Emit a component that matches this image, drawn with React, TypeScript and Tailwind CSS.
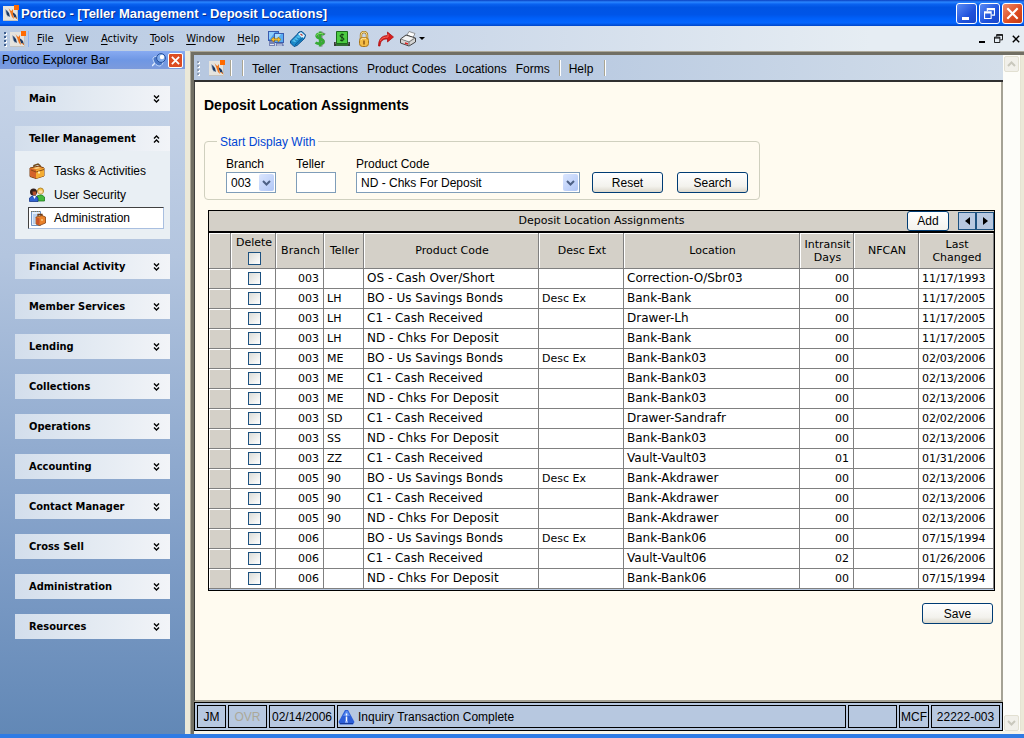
import type { ReactNode } from 'react';

const uiFont = "font-['Liberation_Sans',Arial,sans-serif]";
const tahoma = "font-['DejaVu_Sans_Condensed','Liberation_Sans',sans-serif]";
const verdana = "font-['DejaVu_Sans',sans-serif]";

function Logo() {
  return (
    <svg width="16" height="16" viewBox="0 0 16 16" aria-hidden="true">
      <rect x="0" y="1" width="15" height="15" fill="#e6e4de" />
      <path d="M0 15.500h14.500V5" stroke="#c4c3bf" fill="none" />
      <path d="M2 4l3 2 1 5-1 1-2-3z" fill="#8fa3bd" />
      <path d="M3 5l3 3 1 4-3-2z" fill="#1d3a63" />
      <path d="M9 7l2 1 2 2 1 4-3-2z" fill="#1d3a63" />
      <path d="M5.500 3l1.500 2 1.500 1 1.500-2v5l1 5-2-2-1.500-4z" fill="#f0761e" />
      <path d="M12 12l2 2" stroke="#f0761e" />
      <rect x="11" y="0" width="5" height="5" fill="#ff6a00" />
    </svg>
  );
}

function Svg16({ children }: { children: ReactNode }) {
  return (
    <svg width="16" height="16" viewBox="0 0 16 16" aria-hidden="true">
      {children}
    </svg>
  );
}

function ComputersIcon() {
  return (
    <Svg16>
      <rect x="0.500" y="0.500" width="10" height="9" fill="#4a9dec" stroke="#3a5cae" />
      <path d="M1 1h6l-5 7H1z" fill="#8fcdfa" />
      <rect x="6.500" y="2.500" width="9" height="9" fill="#58adf2" stroke="#3a5cae" />
      <path d="M7 3h6l-5 6H7z" fill="#a6dafc" />
      <path d="M1 10h5l1 2v3H1zM8 12h7l1 3H8z" fill="#7583b5" />
      <path d="M2 13.500h4M9 14h5" stroke="#dfe5f5" />
      <path d="M3 8.500l3-2.500v1.700h4V6l3 2.500-3 2.500V9.300H6V11z" stroke="#a87400" strokeWidth="0.600" fill="#f8c02c" />
    </Svg16>
  );
}

function PhoneIcon() {
  return (
    <Svg16>
      <path d="M0.500 10L7 3.500l2-2.500 3-0.500 3.500 3.500-1 3.500L7 14.500l-3 1L0.500 12z" fill="#1786c8" stroke="#0b4f8c" />
      <path d="M2 10l6-6 2.500 2L4 12.500z" fill="#4fbdec" />
      <path d="M8 3l3-2 4 3.500-1.500 2.500-2-0.500z" fill="#dff3fc" />
      <path d="M10.500 3l2 1.500" stroke="#b43a3a" strokeWidth="1.200" />
      <path d="M3 10.500l1.500 1.500M5 8.500l1.500 1.500M7 6.500l1.500 1.500" stroke="#0b5f9c" />
      <path d="M5 14l8-7.500" stroke="#0d5e9a" />
    </Svg16>
  );
}

function DollarIcon() {
  return (
    <Svg16>
      <path d="M13 3.500C11 1.500 6 2 6 5s6 2.500 6 5.500-4.500 3-7 1M9.500 0.500v15" fill="none" stroke="#7b8a80" strokeWidth="2" />
      <path d="M12 4C10 2 4.500 2 4.500 5s7 2.500 7 5.500-5.500 3-8 1M8 0.500v15" fill="none" stroke="#35ab33" strokeWidth="2.400" />
      <path d="M11 3C9 2 5 2.200 4.500 4.500" fill="none" stroke="#8be36a" />
    </Svg16>
  );
}

function CashIcon() {
  return (
    <Svg16>
      <path d="M0 11h16v4H0z" fill="#3a3a3a" />
      <path d="M1 12h14" stroke="#8d8d8d" />
      <path d="M2.500 0.500h11v12h-11z" fill="#4ccb42" stroke="#1b6a1b" />
      <path d="M10 4C9 3 6 3.300 6 5s4 1.200 4 3-3 2-4 1M8 2.500v8" fill="none" stroke="#0e3b10" />
      <path d="M2 14h12" stroke="#2c9e2c" />
    </Svg16>
  );
}

function LockIcon() {
  return (
    <Svg16>
      <path d="M5 8V4a3 3 0 0 1 6 0v4" fill="none" stroke="#a77b22" strokeWidth="2.400" />
      <path d="M5 8V4a3 3 0 0 1 6 0v4" fill="none" stroke="#f7dc8c" />
      <rect x="3.500" y="6.500" width="9" height="9" rx="3" fill="#f4bd45" stroke="#a8741b" />
      <path d="M5 9c0-2 3-2 5-1.500" stroke="#fdeab0" fill="none" />
      <path d="M8 9.500v4" stroke="#8c5510" strokeWidth="1.500" />
    </Svg16>
  );
}

function ArrowIcon() {
  return (
    <Svg16>
      <path d="M0.500 15C0.500 8 4 4.500 9.500 4.500V1l6 5-6 5V8C5 8 2.500 9.500 2 15z" fill="#d81c1c" stroke="#a30d0d" strokeWidth="0.700" />
      <path d="M2 10c1.500-3 4-4 8-4V3" stroke="#f46a5c" fill="none" />
    </Svg16>
  );
}

function PrinterIcon() {
  return (
    <Svg16>
      <path d="M7 4l2-3.500 6 2-2 4z" fill="#ffffff" stroke="#7c7c7c" strokeWidth="0.800" />
      <path d="M0.500 8L6 4l9.500 3v4L9 15 0.500 12z" fill="#d4d4d4" stroke="#444" />
      <path d="M1 8l8 3 6-4M9 11v4" stroke="#777" fill="none" />
      <path d="M2 8l4-3 7 2-4 3z" fill="#f4f4f4" />
      <path d="M5 12l3 1" stroke="#d82222" strokeWidth="1.500" />
    </Svg16>
  );
}

function BriefcaseIcon() {
  return (
    <Svg16>
      <path d="M5 5V2.500l4-1.500 2 1.500V5" fill="none" stroke="#6d4a1c" strokeWidth="1.500" />
      <path d="M1 5l9-2 5 2v8l-8 2.500-6-2z" fill="#e98b2a" stroke="#7c3f10" />
      <path d="M7 7l8-2v8l-8 2.500z" fill="#f4ad33" />
      <path d="M1 5l6 2v8l-6-2z" fill="#d4622a" />
      <path d="M2 7l5 2 8-2.500" stroke="#8c4a14" fill="none" />
      <path d="M9 8.500h2v2H9z" fill="#fff0b8" />
      <path d="M4 5l5-1 3 1-5 1z" fill="#fbd68a" />
    </Svg16>
  );
}

function UsersIcon() {
  return (
    <Svg16>
      <circle cx="11.500" cy="4" r="3" fill="#f6c34a" stroke="#a37418" strokeWidth="0.800" />
      <path d="M9.500 3.500h4v3h-4z" fill="#fbdcae" />
      <path d="M8 14V9l3-1h2l2.500 2v4z" fill="#43b93a" stroke="#217a20" strokeWidth="0.800" />
      <circle cx="4.500" cy="5" r="3.500" fill="#33201c" />
      <path d="M3.500 4.500h3.500v4H4z" fill="#b5502c" />
      <path d="M0.500 14.500V11L3 9h4l2 2v3.500z" fill="#2f62d0" stroke="#173a8e" strokeWidth="0.800" />
      <path d="M4 9l1.500 3L7 9z" fill="#ffffff" />
    </Svg16>
  );
}

function AdminIcon() {
  return (
    <Svg16>
      <path d="M1.500 1.500h9v14h-9z" fill="#e4effb" stroke="#6f93c4" />
      <path d="M1 1.500h10" stroke="#8a7a4a" strokeDasharray="1 1" />
      <path d="M3 5h6M3 7h3M3 9h2M3 11h2M3 13h2" stroke="#8fb2de" />
      <path d="M8 6V4.500h4V6" fill="none" stroke="#6d3c14" strokeWidth="1.300" />
      <path d="M6 7l6-1.500 3.500 1.500v6l-6 2.500L6 14z" fill="#e9822a" stroke="#85400f" strokeWidth="0.800" />
      <path d="M6.500 7.500l3 1V15l-3-1.200z" fill="#c9522a" />
      <path d="M12 9v2" stroke="#ffe9a8" />
    </Svg16>
  );
}

function PinIcon() {
  return (
    <svg width="14" height="14" viewBox="0 0 14 14" aria-hidden="true">
      <path d="M0 13l4-4" stroke="#e6f0ff" strokeWidth="1.500" />
      <path d="M1 5c2-2 4-2 6-1l4 4c0 3-1 4-3 5-4 0-7-4-7-8z" fill="#4b78c8" stroke="#dcebff" strokeWidth="0.800" />
      <circle cx="9" cy="5" r="4.400" fill="#7fabeb" stroke="#27509c" />
      <circle cx="10" cy="4" r="2.200" fill="#ffffff" />
    </svg>
  );
}

function AlertIcon() {
  return (
    <svg width="17" height="16" viewBox="0 0 17 16" aria-hidden="true">
      <path d="M7 1h3l6.500 12-1.500 2.500H2L0.500 13z" fill="#2d5fd8" />
      <path d="M8 2h1.500l2.500 5-7 0z" fill="#5b8cf0" />
      <path d="M2 14.500h13" stroke="#153a9c" />
      <path d="M8.500 4.500v2M8.500 7.500v5" stroke="#ffffff" strokeWidth="1.500" />
      <path d="M7 13h3" stroke="#c9dbff" />
    </svg>
  );
}

function Chevrons({ up = false }: { up?: boolean }) {
  return (
    <svg width="7" height="8" viewBox="0 0 7 8" aria-hidden="true" fill="none" stroke="#000" strokeWidth="1.400">
      {up ? <path d="M1 3.500l2.500-2.500 2.500 2.500M1 7.500l2.500-2.500 2.500 2.500" /> : <path d="M1 0.500l2.500 2.500 2.500-2.500M1 4.500l2.500 2.500 2.500-2.500" />}
    </svg>
  );
}

function Grip({ tone }: { tone: string }) {
  return (
    <span className="flex flex-col gap-[2px]" aria-hidden="true">
      {[0, 1, 2, 3].map((i) => (
        <span key={i} className={`h-[2px] w-[2px] shadow-[1px_1px_0_#ffffff] ${tone}`} />
      ))}
    </span>
  );
}

function RestoreGlyph({ size }: { size: number }) {
  return (
    <svg width={size} height={size} viewBox="0 0 10 10" aria-hidden="true" fill="none" stroke="currentColor">
      <path d="M3 3V0.500h6.500v6H7M3 1.500h6.500" />
      <path d="M0.500 3.500h6v6h-6zM0.500 4.500h6" />
    </svg>
  );
}

function CrossGlyph({ size, weight }: { size: number; weight: number }) {
  return (
    <svg width={size} height={size} viewBox="0 0 10 10" aria-hidden="true" stroke="currentColor" strokeWidth={weight}>
      <path d="M1 1l8 8M9 1l-8 8" />
    </svg>
  );
}

function TitleBar() {
  const btn = 'flex h-[21px] w-[21px] items-center justify-center rounded-[3px] border border-white text-white';
  return (
    <header className="flex h-[26px] shrink-0 items-center bg-[linear-gradient(to_bottom,#0a3fc0_0%,#2a86ff_8%,#0a62f0_16%,#0054e3_28%,#0055e8_56%,#0060fa_72%,#0566fe_88%,#0046c8_100%)] pr-[1px] pl-[3px]">
      <Logo />
      <h1 className="grow pt-[1px] pl-[2px] text-[13px] font-bold text-white [text-shadow:1px_1px_0_#0a2f8c]">
        Portico - [Teller Management - Deposit Locations]
      </h1>
      <div className="flex gap-[2px]">
        <button type="button" aria-label="Minimize" className={`${btn} bg-[linear-gradient(135deg,#5a8bf5,#1f52dc_60%,#1a47c8)]`}>
          <span className="mr-[3px] mb-[3px] h-[3px] w-[7px] self-end bg-white" />
        </button>
        <button type="button" aria-label="Restore" className={`${btn} bg-[linear-gradient(135deg,#5a8bf5,#1f52dc_60%,#1a47c8)]`}>
          <RestoreGlyph size={11} />
        </button>
        <button type="button" aria-label="Close" className={`${btn} bg-[linear-gradient(135deg,#ee8b6c,#dc4a1f_60%,#c23a12)]`}>
          <CrossGlyph size={13} weight={1.6} />
        </button>
      </div>
    </header>
  );
}

const menus = ['File', 'View', 'Activity', 'Tools', 'Window', 'Help'];
const tools: [string, ReactNode][] = [
  ['Connect', <ComputersIcon />],
  ['Phone', <PhoneIcon />],
  ['Currency', <DollarIcon />],
  ['Cash', <CashIcon />],
  ['Lock', <LockIcon />],
  ['Forward', <ArrowIcon />],
  ['Print', <PrinterIcon />],
];

function MenuBar() {
  return (
    <nav className="flex h-[25px] shrink-0 items-center bg-[linear-gradient(to_right,#b9cbe3,#c9d6e8_40%,#e6edf3_85%)] pr-[4px] pl-[4px]">
      <Grip tone="bg-[#3f5f8e]" />
      <span className="ml-[4px] border-r border-[#8fb2ec] pr-[2px]">
        <Logo />
      </span>
      <div className={`ml-[2px] flex pt-[1px] text-[11px] ${tahoma}`}>
        {menus.map((m) => (
          <button key={m} type="button" className="px-[6px]">
            <span className="underline underline-offset-2">{m[0]}</span>
            {m.slice(1)}
          </button>
        ))}
      </div>
      <div className="ml-[2px] flex gap-[6px]">
        {tools.map(([name, icon]) => (
          <button key={name} type="button" aria-label={name}>
            {icon}
          </button>
        ))}
      </div>
      <button type="button" aria-label="Print options" className="ml-[3px] border-x-[3px] border-t-[3px] border-x-transparent border-t-black" />
      <div className="ml-auto flex items-center gap-[9px]">
        <button type="button" aria-label="Minimize window" className="flex h-[9px] items-end">
          <span className="h-[2px] w-[6px] bg-black" />
        </button>
        <button type="button" aria-label="Restore window">
          <RestoreGlyph size={9} />
        </button>
        <button type="button" aria-label="Close window">
          <CrossGlyph size={8} weight={1.8} />
        </button>
      </div>
    </nav>
  );
}

function SectionHeader({ title, open = false }: { title: string; open?: boolean }) {
  return (
    <button
      type="button"
      aria-expanded={open}
      className={`flex h-[25px] w-full items-center justify-between bg-[linear-gradient(to_right,#d3deec,#e3eaf2_50%,#f2f4f8)] pr-[10px] pl-[14px] text-[11px] font-bold ${tahoma}`}
    >
      <span className="pt-[2px]">{title}</span>
      <Chevrons up={open} />
    </button>
  );
}

const sections = [
  'Financial Activity',
  'Member Services',
  'Lending',
  'Collections',
  'Operations',
  'Accounting',
  'Contact Manager',
  'Cross Sell',
  'Administration',
  'Resources',
];

function Sidebar() {
  return (
    <aside className="flex w-[185px] shrink-0 flex-col bg-[linear-gradient(to_bottom,#c9d6e9,#b3c5df_30%,#7d9cc6_75%,#6288b6)]">
      <div className="flex h-[18px] items-center bg-[linear-gradient(to_bottom,#88abf2,#6f97e4_50%,#7c9bdc)] pr-[2px] pl-[2px]">
        <h2 className="grow text-[12px]">Portico Explorer Bar</h2>
        <button type="button" aria-label="Pin">
          <PinIcon />
        </button>
        <button type="button" aria-label="Close explorer bar" className="ml-[2px] flex h-[15px] w-[15px] items-center justify-center rounded-[2px] border border-white bg-[#dd4c22] text-white">
          <CrossGlyph size={9} weight={2} />
        </button>
      </div>
      <div className="flex flex-col gap-[15px] px-[15px] pt-[17px]">
        <SectionHeader title="Main" />
        <section className="bg-[#e9eff4]">
          <SectionHeader title="Teller Management" open />
          <ul className="flex flex-col px-[6px] pt-[8px] pb-[10px] text-[12px]">
            <li>
              <a href="#tasks" className="flex h-[24px] items-center gap-[9px] pl-[8px]">
                <BriefcaseIcon />
                Tasks &amp; Activities
              </a>
            </li>
            <li>
              <a href="#security" className="flex h-[24px] items-center gap-[9px] pl-[8px]">
                <UsersIcon />
                User Security
              </a>
            </li>
            <li className="ml-[7px]">
              <a href="#administration" className="flex h-[22px] items-center gap-[8px] border border-t-[#404040] border-r-[#a9bfe0] border-b-[#a9bfe0] border-l-[#404040] bg-white pl-[1px]">
                <AdminIcon />
                Administration
              </a>
            </li>
          </ul>
        </section>
        {sections.map((s) => (
          <SectionHeader key={s} title={s} />
        ))}
      </div>
    </aside>
  );
}

function Divider() {
  return <span className="block h-[16px] w-[2px] border-r border-l border-r-white border-l-[#a9a593]" aria-hidden="true" />;
}

function PageToolbar() {
  return (
    <nav className="flex h-[27px] items-center border-b-2 border-[#303030] bg-[linear-gradient(to_right,#b7c8e0,#b9cae1_45%,#d3deea)] text-[12px]">
      <span className="ml-[3px]">
        <Grip tone="bg-[#8e9bb0]" />
      </span>
      <span className="mr-[5px] ml-[10px]">
        <Logo />
      </span>
      <Divider />
      <span className="ml-[10px]">
        <Divider />
      </span>
      <div className="ml-[8px] flex gap-[9px] pt-[2px]">
        <button type="button">Teller</button>
        <button type="button">Transactions</button>
        <button type="button">Product Codes</button>
        <button type="button">Locations</button>
        <button type="button">Forms</button>
      </div>
      <span className="mr-[8px] ml-[9px]">
        <Divider />
      </span>
      <button type="button" className="pt-[2px]">Help</button>
      <span className="ml-[11px]">
        <Divider />
      </span>
    </nav>
  );
}

const pushButton =
  'h-[21px] w-[71px] rounded-[3px] border border-[#003c74] bg-[linear-gradient(to_bottom,#ffffff,#f3f2ed_70%,#dcd8cc)] pt-[1px] text-[12px]';

function SelectBox({ id, value, className }: { id: string; value: string; className: string }) {
  return (
    <div className="relative">
      <select id={id} defaultValue={value} className={`block h-[21px] appearance-none border border-[#7f9db9] bg-white pl-[4px] text-[12px] ${className}`}>
        <option>{value}</option>
      </select>
      <span className="pointer-events-none absolute top-[2px] right-[2px] flex h-[17px] w-[15px] items-center justify-center rounded-[2px] bg-[linear-gradient(135deg,#dbe6fe,#b0c6f6)]">
        <svg width="9" height="6" viewBox="0 0 9 6" aria-hidden="true" fill="none" stroke="#4d6185" strokeWidth="2">
          <path d="M1 1l3.500 3.500L8 1" />
        </svg>
      </span>
    </div>
  );
}

function FilterForm() {
  return (
    <fieldset className="mt-[19px] mr-auto ml-[9px] rounded-[4px] border border-[#d0d0bf] pr-[11px] pb-[6px] pl-[12px] text-[12px]">
      <legend className="px-[3px] pt-[2px] leading-[16px] text-[#0046d5]">Start Display With</legend>
      <div className="flex items-end pt-[6px] pl-[9px]">
        <div>
          <label htmlFor="branch" className="block leading-[16px]">Branch</label>
          <SelectBox id="branch" value="003" className="w-[50px]" />
        </div>
        <div className="ml-[20px]">
          <label htmlFor="teller" className="block leading-[16px]">Teller</label>
          <input id="teller" type="text" className="block h-[21px] w-[40px] border border-[#7f9db9] bg-white px-[3px]" />
        </div>
        <div className="ml-[20px]">
          <label htmlFor="product" className="block leading-[16px]">Product Code</label>
          <SelectBox id="product" value="ND - Chks For Deposit" className="w-[224px]" />
        </div>
        <button type="button" className={`ml-[12px] ${pushButton}`}>Reset</button>
        <button type="button" className={`ml-[14px] ${pushButton}`}>Search</button>
      </div>
    </fieldset>
  );
}

type Row = [branch: string, teller: string, product: string, desc: string, location: string, days: string, changed: string];

const rows: Row[] = [
  ['003', '', 'OS - Cash Over/Short', '', 'Correction-O/Sbr03', '00', '11/17/1993'],
  ['003', 'LH', 'BO - Us Savings Bonds', 'Desc Ex', 'Bank-Bank', '00', '11/17/2005'],
  ['003', 'LH', 'C1 - Cash Received', '', 'Drawer-Lh', '00', '11/17/2005'],
  ['003', 'LH', 'ND - Chks For Deposit', '', 'Bank-Bank', '00', '11/17/2005'],
  ['003', 'ME', 'BO - Us Savings Bonds', 'Desc Ex', 'Bank-Bank03', '00', '02/03/2006'],
  ['003', 'ME', 'C1 - Cash Received', '', 'Bank-Bank03', '00', '02/13/2006'],
  ['003', 'ME', 'ND - Chks For Deposit', '', 'Bank-Bank03', '00', '02/13/2006'],
  ['003', 'SD', 'C1 - Cash Received', '', 'Drawer-Sandrafr', '00', '02/02/2006'],
  ['003', 'SS', 'ND - Chks For Deposit', '', 'Bank-Bank03', '00', '02/13/2006'],
  ['003', 'ZZ', 'C1 - Cash Received', '', 'Vault-Vault03', '01', '01/31/2006'],
  ['005', '90', 'BO - Us Savings Bonds', 'Desc Ex', 'Bank-Akdrawer', '00', '02/13/2006'],
  ['005', '90', 'C1 - Cash Received', '', 'Bank-Akdrawer', '00', '02/13/2006'],
  ['005', '90', 'ND - Chks For Deposit', '', 'Bank-Akdrawer', '00', '02/13/2006'],
  ['006', '', 'BO - Us Savings Bonds', 'Desc Ex', 'Bank-Bank06', '00', '07/15/1994'],
  ['006', '', 'C1 - Cash Received', '', 'Vault-Vault06', '02', '01/26/2006'],
  ['006', '', 'ND - Chks For Deposit', '', 'Bank-Bank06', '00', '07/15/1994'],
];

const checkbox =
  'block h-[13px] w-[13px] mx-auto appearance-none border border-[#1c5180] bg-[linear-gradient(135deg,#dcdcd7,#ffffff)]';

function AssignmentsTable() {
  const th = 'border-r border-b border-[#808080] bg-[#d4d0c8] pl-[2px] font-normal leading-[13px] shadow-[inset_1px_1px_0_#ffffff]';
  const cell = 'h-[20px] border-r border-b border-[#808080] bg-white leading-[19px] whitespace-nowrap';
  const td = `${cell} px-[3px]`;
  const tdCheck = `${cell} pl-[2px]`;
  const tdNum = `${cell} pr-[4px] text-right`;
  return (
    <section className={`mt-[10px] mr-[6px] ml-[13px] border border-black bg-[#b7c8e0] pb-[1px] text-[11px] ${verdana}`}>
      <div className="grid h-[22px] grid-cols-[1fr_auto_1fr] items-center border-b-2 border-black bg-[#d4d0c8]">
        <span />
        <h3>Deposit Location Assignments</h3>
        <div className="flex items-center justify-end">
          <button type="button" className={`mr-[9px] h-[20px] w-[42px] rounded-[3px] border border-[#003c74] bg-[linear-gradient(to_bottom,#ffffff,#f3f2ed)] text-[12px] ${uiFont}`}>
            Add
          </button>
          <button type="button" aria-label="Previous page" className="flex h-[18px] w-[18px] items-center justify-center border border-[#1c5180] bg-[#b7c8e0]">
            <span className="border-y-[4px] border-r-[5px] border-y-transparent border-r-black" />
          </button>
          <button type="button" aria-label="Next page" className="flex h-[18px] w-[18px] items-center justify-center border border-[#1c5180] bg-[#b7c8e0]">
            <span className="border-y-[4px] border-l-[5px] border-y-transparent border-l-black" />
          </button>
        </div>
      </div>
      <table className="w-full table-fixed border-separate border-spacing-0">
        <colgroup>
          <col className="w-[22px]" />
          <col className="w-[45px]" />
          <col className="w-[48px]" />
          <col className="w-[40px]" />
          <col className="w-[175px]" />
          <col className="w-[85px]" />
          <col />
          <col className="w-[54px]" />
          <col className="w-[65px]" />
          <col className="w-[75px]" />
        </colgroup>
        <thead>
          <tr className="h-[36px]">
            <th className={th} aria-label="Row" />
            <th className={th}>
              <label htmlFor="delete-all" className="block pb-[3px]">Delete</label>
              <input id="delete-all" type="checkbox" className={checkbox} />
            </th>
            <th className={th}>Branch</th>
            <th className={th}>Teller</th>
            <th className={th}>Product Code</th>
            <th className={th}>Desc Ext</th>
            <th className={th}>Location</th>
            <th className={th}>Intransit Days</th>
            <th className={th}>NFCAN</th>
            <th className={th}>Last Changed</th>
          </tr>
        </thead>
        <tbody>
          {rows.map(([branch, teller, product, desc, location, days, changed], i) => (
            <tr key={i}>
              <td className="h-[20px] border-r border-b border-[#808080] bg-[#d4d0c8] shadow-[inset_1px_1px_0_#ffffff]" />
              <td className={tdCheck}>
                <input type="checkbox" aria-label={`Delete row ${i + 1}`} className={checkbox} />
              </td>
              <td className={tdNum}>{branch}</td>
              <td className={td}>{teller}</td>
              <td className={`${td} text-[12px]`}>{product}</td>
              <td className={td}>{desc}</td>
              <td className={`${td} text-[12px]`}>{location}</td>
              <td className={tdNum}>{days}</td>
              <td className={td} />
              <td className={td}>{changed}</td>
            </tr>
          ))}
        </tbody>
      </table>
    </section>
  );
}

function StatusBar() {
  const cell = 'flex items-center justify-center border border-black';
  return (
    <footer className="flex h-[29px] gap-[2px] border border-black bg-[#b7c8e0] p-[2px] text-[12px]">
      <span className={`${cell} w-[29px]`}>JM</span>
      <span className={`${cell} w-[39px] text-[#aca899]`}>OVR</span>
      <span className={`${cell} w-[66px]`}>02/14/2006</span>
      <span className="flex grow items-center gap-[3px] border border-black">
        <AlertIcon />
        Inquiry Transaction Complete
      </span>
      <span className={`${cell} w-[49px]`} />
      <span className={`${cell} w-[30px]`}>MCF</span>
      <span className={`${cell} w-[69px]`}>22222-003</span>
    </footer>
  );
}

function ScrollButton({ up = false }: { up?: boolean }) {
  return (
    <button type="button" disabled aria-label={up ? 'Scroll up' : 'Scroll down'} className="flex h-[16px] w-[15px] items-center justify-center rounded-[2px] border border-[#e2e0d2] bg-[#f1f0ea]">
      <svg width="9" height="6" viewBox="0 0 9 6" aria-hidden="true" fill="none" stroke="#c9c8bd" strokeWidth="2">
        {up ? <path d="M1 5l3.500-3.500L8 5" /> : <path d="M1 1l3.500 3.500L8 1" />}
      </svg>
    </button>
  );
}

export default function App() {
  return (
    <div className={`flex min-h-screen flex-col overflow-hidden bg-[#ece9d8] text-black ${uiFont}`}>
      <TitleBar />
      <MenuBar />
      <div className="flex grow">
        <Sidebar />
        <div className="ml-[5px] flex min-w-0 grow flex-col border-t border-l border-[#aca899]">
          <div className="flex grow flex-col border-t-[3px] border-l-[3px] border-[#716f64]">
            <div className="flex grow">
              <main className="flex min-w-0 grow flex-col">
                <PageToolbar />
                <div className="flex grow flex-col border-r-2 border-b-2 border-l border-r-[#a5a295] border-b-[#a5a295] border-l-[#404040] bg-[#fffbf0]">
                  <h2 className="ml-[9px] pt-[15px] text-[14px] leading-[16px] font-bold">Deposit Location Assignments</h2>
                  <FilterForm />
                  <AssignmentsTable />
                  <button type="button" className={`mt-[12px] mr-[8px] self-end ${pushButton}`}>Save</button>
                </div>
                <StatusBar />
              </main>
              <div className="mr-[3px] flex w-[18px] shrink-0 flex-col items-center justify-between border-r border-[#e6e3d3] bg-[#fdfdf9] pt-[1px]">
                <ScrollButton up />
                <ScrollButton />
              </div>
            </div>
            <div className="h-[3px] bg-[#f6f4ea]" />
          </div>
        </div>
      </div>
      <div className="h-[4px] shrink-0 bg-[#2f7be4]" />
    </div>
  );
}
